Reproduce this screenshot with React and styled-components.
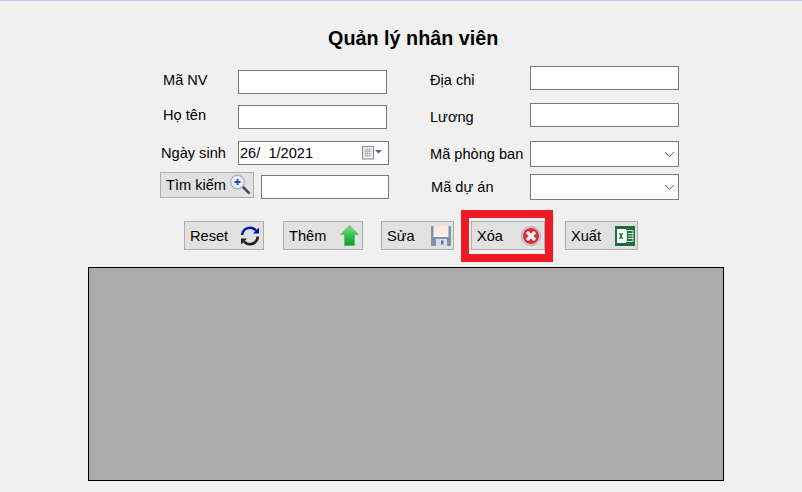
import React from "react";
import styled, { createGlobalStyle } from "styled-components";

const Global = createGlobalStyle`
  html, body { margin: 0; padding: 0; background: #f0f0f0; }
  body { font-family: "Liberation Sans", Arial, sans-serif; }
  * { box-sizing: border-box; }
`;

const Page = styled.div`
  width: 802px;
  height: 492px;
  overflow: hidden;
  background: #f0f0f0;
  border-top: 1px solid #b4d2f0;
  display: flex;
  flex-direction: column;
  color: #000;
  font-size: 14.6px;
`;
const Title = styled.h1`
  margin: 25px 0 0 328px;
  height: 24px;
  font-size: 19.8px;
  line-height: 24px;
  font-weight: 700;
  white-space: nowrap;
`;
const Form = styled.div`
  display: flex;
  margin: 16px 0 0 160px;
`;
const LeftCol = styled.div`
  width: 270px;
  display: flex;
  flex-direction: column;
`;
const RightCol = styled.div`
  width: 249px;
  display: flex;
  flex-direction: column;
`;
const Row = styled.div`
  display: flex;
  align-items: flex-start;
  margin-top: ${(p) => p.$top}px;
`;
const Label = styled.span`
  width: ${(p) => p.$w}px;
  padding-left: ${(p) => p.$pad || 0}px;
  padding-top: ${(p) => p.$dy || 0}px;
  line-height: 16px;
  white-space: nowrap;
  flex: none;
`;
const Field = styled.div`
  width: ${(p) => p.$w || 149}px;
  height: ${(p) => p.$h || 24}px;
  margin-top: ${(p) => p.$dy || 0}px;
  margin-left: ${(p) => p.$ml || 0}px;
  background: #fff;
  border: 1px solid #7a7a7a;
  display: flex;
  align-items: center;
  justify-content: space-between;
  flex: none;
`;
const DateText = styled.span`
  padding-left: 1px;
  white-space: pre;
  line-height: 16px;
`;
const DateIcons = styled.span`
  display: flex;
  align-items: center;
  margin-right: 6px;
`;
const Chevron = styled.svg`
  width: 11px;
  height: 7px;
  margin-right: 3px;
`;
const Button = styled.div`
  position: relative;
  width: ${(p) => p.$w}px;
  height: ${(p) => p.$h || 29}px;
  margin-left: ${(p) => p.$ml || 0}px;
  padding: 0 ${(p) => p.$pr ?? 3}px 0 ${(p) => p.$pl || 5}px;
  background: #e1e1e1;
  border: 1px solid #adadad;
  display: flex;
  align-items: center;
  justify-content: space-between;
  line-height: 16px;
  flex: none;
`;
const Highlight = styled.span`
  position: absolute;
  left: -11px;
  top: -12px;
  width: 92px;
  height: 52px;
  border: 8px solid #ed1c24;
  pointer-events: none;
`;
const Toolbar = styled.div`
  display: flex;
  margin: 21px 0 0 184px;
`;
const Grid = styled.div`
  width: 636px;
  height: 214px;
  margin: 17px 0 0 88px;
  background: #ababab;
  border: 1px solid #000;
`;

const Calendar = () => (
  <svg width="20" height="14" viewBox="0 0 20 14">
    <rect x=".5" y=".5" width="11" height="12.500" fill="#eceef2" stroke="#8a8482" />
    <path d="M2.500 3.500h7M2.500 5.500h7M2.500 7.500h7M2.500 9.500h7M3.500 2.500v8M5.500 2.500v8M7.500 2.500v8" stroke="#b3b8c4" strokeWidth="1" />
    <path d="M13 4h7l-3.500 3.500z" fill="#4f6283" />
  </svg>
);
const Magnifier = () => (
  <svg width="24" height="24" viewBox="0 0 24 24">
    <path d="M13.500 13.500l7 7" stroke="#4a4a4a" strokeWidth="2.500" />
    <circle cx="8.500" cy="9" r="6.800" fill="#e6eff8" stroke="#a3aebb" strokeWidth="1.200" />
    <path d="M8.500 6v6M5.500 9h6" stroke="#2c46c8" strokeWidth="1.800" />
  </svg>
);
const Sync = () => (
  <svg width="20" height="20" viewBox="0 0 20 20" fill="none">
    <path d="M2 9C2.600 4.500 6 1.800 10 1.800c2.600 0 4.500 1 5.800 2.700" stroke="#0012b0" strokeWidth="2.600" />
    <path d="M19 1.500V7.500h-6z" fill="#0012b0" />
    <path d="M18 10.500c-.5 4.500-4 7.700-8 7.700-2.600 0-4.500-1-5.800-2.700" stroke="#231c18" strokeWidth="2.600" />
    <path d="M1 18.500V12.500h6z" fill="#231c18" />
  </svg>
);
const UpArrow = () => (
  <svg width="19" height="21" viewBox="0 0 19 21">
    <defs>
      <linearGradient id="ga" x1="0" y1="0" x2="0" y2="1">
        <stop offset="0" stopColor="#86dc86" />
        <stop offset=".5" stopColor="#2fc24a" />
        <stop offset="1" stopColor="#159a30" />
      </linearGradient>
    </defs>
    <path d="M9.500 .5L18.500 9.500H14.500V20.500H4.500V9.500H.5z" fill="url(#ga)" stroke="#58b066" strokeWidth=".6" />
  </svg>
);
const Floppy = () => (
  <svg width="20" height="20" viewBox="0 0 20 20">
    <defs>
      <linearGradient id="gf" x1="0" y1="0" x2="0" y2="1">
        <stop offset="0" stopColor="#fbe4dc" />
        <stop offset="1" stopColor="#f6f3f4" />
      </linearGradient>
    </defs>
    <rect x="0" y="0" width="20" height="20" rx="1" fill="#7f93a8" />
    <rect x="2.500" y="0" width="15" height="11" fill="url(#gf)" />
    <rect x="5" y="13" width="11" height="7" fill="#d9dfe6" />
    <rect x="10" y="14.500" width="2.500" height="4" fill="#5d6f85" />
  </svg>
);
const RedX = () => (
  <svg width="20" height="20" viewBox="0 0 20 20">
    <circle cx="10" cy="10" r="9.500" fill="#d8d0d0" stroke="#a89a9a" strokeWidth=".8" />
    <circle cx="10" cy="10" r="8" fill="#d42f3c" />
    <path d="M6 6l8 8M14 6l-8 8" stroke="#f4eeee" strokeWidth="3.400" />
  </svg>
);
const Excel = () => (
  <svg width="20" height="20" viewBox="0 0 20 20">
    <rect x="0" y="0" width="20" height="20" fill="#1d6f42" />
    <rect x="2" y="3" width="9" height="14" fill="#fff" />
    <path d="M11.500 4.500h6.500v11h-6.500z" fill="none" stroke="#d6e8dc" strokeWidth="1" />
    <path d="M13 7.500h5M13 10h5M13 12.500h5" stroke="#d6e8dc" strokeWidth="1" />
    <path d="M4.500 7l3 6M7.500 7l-3 6" stroke="#1d6f42" strokeWidth="1.400" />
  </svg>
);
const Down = () => (
  <Chevron viewBox="0 0 11 7" fill="none">
    <path d="M1 1l4.500 4.500L10 1" stroke="#606060" strokeWidth="1" />
  </Chevron>
);

export default function App() {
  return (
    <Page>
      <Global />
      <Title>Quản lý nhân viên</Title>
      <Form>
        <LeftCol>
          <Row $top={4}>
            <Label $w={78} $pad={3} $dy={2}>Mã NV</Label>
            <Field />
          </Row>
          <Row $top={11}>
            <Label $w={78} $pad={3} $dy={2}>Họ tên</Label>
            <Field />
          </Row>
          <Row $top={12}>
            <Label $w={78} $pad={1} $dy={4}>Ngày sinh</Label>
            <Field $w={151}>
              <DateText>26/  1/2021</DateText>
              <DateIcons><Calendar /></DateIcons>
            </Field>
          </Row>
          <Row $top={7}>
            <Button $w={94} $h={26} $pl={5} $pr={0}>
              Tìm kiếm
              <Magnifier />
            </Button>
            <Field $w={128} $dy={3} $ml={7} />
          </Row>
        </LeftCol>
        <RightCol>
          <Row $top={0}>
            <Label $w={100} $dy={6}>Địa chỉ</Label>
            <Field />
          </Row>
          <Row $top={13}>
            <Label $w={100} $dy={6}>Lương</Label>
            <Field />
          </Row>
          <Row $top={14}>
            <Label $w={100} $dy={5}>Mã phòng ban</Label>
            <Field $h={26}><span /><Down /></Field>
          </Row>
          <Row $top={7}>
            <Label $w={100} $pad={1} $dy={5}>Mã dự án</Label>
            <Field $h={26}><span /><Down /></Field>
          </Row>
        </RightCol>
      </Form>
      <Toolbar>
        <Button $w={80}>Reset<Sync /></Button>
        <Button $w={80} $ml={19}>Thêm<UpArrow /></Button>
        <Button $w={73} $ml={18} $pr={2}>Sửa<Floppy /></Button>
        <Button $w={74} $ml={17}>Xóa<RedX /><Highlight /></Button>
        <Button $w={73} $ml={20} $pr={2}>Xuất<Excel /></Button>
      </Toolbar>
      <Grid />
    </Page>
  );
}
